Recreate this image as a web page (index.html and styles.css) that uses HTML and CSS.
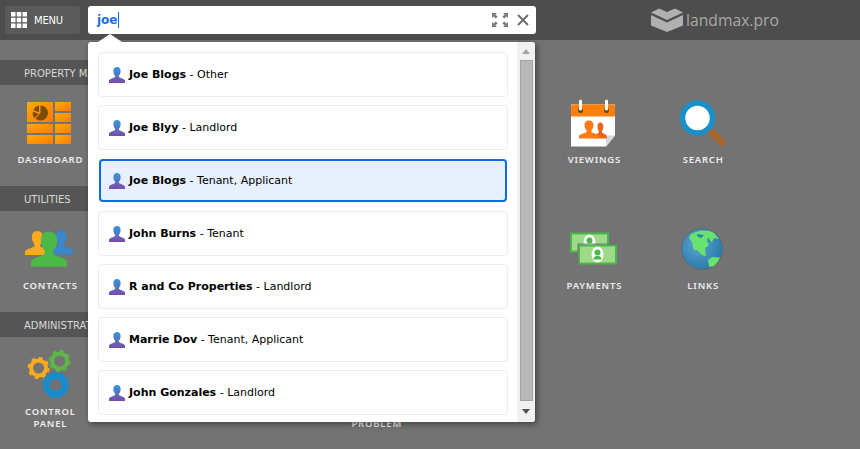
FILE: index.html
```html
<!DOCTYPE html>
<html lang="en">
<head>
<meta charset="utf-8">
<title>landmax.pro</title>
<link rel="stylesheet" href="styles.css">
</head>
<body>
<svg class="defs" width="0" height="0" aria-hidden="true">
  <defs>
    <linearGradient id="pg" x1="0" y1="0" x2="0" y2="1"><stop offset="0" stop-color="#2f9bdc"/><stop offset="1" stop-color="#7d4aa8"/></linearGradient>
    <linearGradient id="og" x1="0" y1="0" x2="1" y2="1"><stop offset="0" stop-color="#ffab0a"/><stop offset="1" stop-color="#ff7a00"/></linearGradient>
    <radialGradient id="gg" cx=".4" cy=".4" r=".7"><stop offset="0" stop-color="#5aa6cf"/><stop offset="1" stop-color="#2474a6"/></radialGradient>
    <path id="bust" d="M8 0C5.400 0 4.400 2 4.400 4.200c0 2 .9 3.600 1.700 4.600v1.300C4.600 11.300 1 11.800 0 13.500V16h16v-2.500c-1-1.700-4.600-2.200-6.100-3.400V8.800c.8-1 1.700-2.600 1.700-4.600C11.600 2 10.600 0 8 0z"/>
    <symbol id="person" viewBox="0 0 16 16"><use href="#bust" fill="url(#pg)"/></symbol>
  </defs>
</svg>

<header class="topbar">
  <button class="menu-btn" type="button">
    <svg class="menu-icon" viewBox="0 0 16 16" width="16" height="16"><g fill="#fff"><rect width="4.500" height="4.500"/><rect x="5.750" width="4.500" height="4.500"/><rect x="11.500" width="4.500" height="4.500"/><rect y="5.750" width="4.500" height="4.500"/><rect x="5.750" y="5.750" width="4.500" height="4.500"/><rect x="11.500" y="5.750" width="4.500" height="4.500"/><rect y="11.500" width="4.500" height="4.500"/><rect x="5.750" y="11.500" width="4.500" height="4.500"/><rect x="11.500" y="11.500" width="4.500" height="4.500"/></g></svg>
    <span>MENU</span>
  </button>

  <div class="search">
    <div class="search-box">
      <span class="query">joe</span>
      <svg class="s-icon expand" viewBox="0 0 16 14" width="16" height="14"><path fill="#7b7b7b" d="M0 0h5L3.400 1.600 5.600 3.800 3.800 5.600 1.600 3.400 0 5zM16 0v5L14.400 3.400 12.200 5.600 10.400 3.800 12.600 1.600 11 0zM0 14V9L1.600 10.600 3.800 8.400 5.600 10.200 3.400 12.400 5 14zM16 14h-5L12.600 12.400 10.400 10.200 12.200 8.400 14.400 10.600 16 9z"/></svg>
      <svg class="s-icon" viewBox="0 0 12 12" width="12" height="12"><path d="M1 1l10 10M11 1L1 11" stroke="#6f6f6f" stroke-width="2" fill="none"/></svg>
    </div>
    <div class="results">
      <ul class="result-list">
        <li class="result"><svg class="person" width="16" height="16"><use href="#person"/></svg><span><b>Joe Blogs</b> - Other</span></li>
        <li class="result"><svg class="person" width="16" height="16"><use href="#person"/></svg><span><b>Joe Blyy</b> - Landlord</span></li>
        <li class="result selected"><svg class="person" width="16" height="16"><use href="#person"/></svg><span><b>Joe Blogs</b> - Tenant, Applicant</span></li>
        <li class="result"><svg class="person" width="16" height="16"><use href="#person"/></svg><span><b>John Burns</b> - Tenant</span></li>
        <li class="result"><svg class="person" width="16" height="16"><use href="#person"/></svg><span><b>R and Co Properties</b> - Landlord</span></li>
        <li class="result"><svg class="person" width="16" height="16"><use href="#person"/></svg><span><b>Marrie Dov</b> - Tenant, Applicant</span></li>
        <li class="result"><svg class="person" width="16" height="16"><use href="#person"/></svg><span><b>John Gonzales</b> - Landlord</span></li>
      </ul>
      <div class="scrollbar">
        <span class="arrow up"></span>
        <span class="thumb"></span>
        <span class="arrow down"></span>
      </div>
    </div>
  </div>

  <div class="logo">
    <svg viewBox="0 0 32 24" width="32" height="24"><g fill="#b0b0b0"><path d="M0 4.500 8 .5 16 4 24 .5 32 4.500 16 12z"/><path d="M0 7 16 14.500 32 7V17.500L16 24 0 17.500z"/></g></svg>
    <span>landmax.pro</span>
  </div>
</header>

<main class="content">
  <section class="group">
    <h2 class="band">PROPERTY MANAGEMENT</h2>
    <div class="tiles">
      <a class="tile">
        <svg class="icon" viewBox="0 0 44 42" width="44" height="42">
          <g fill="url(#og)"><rect width="26" height="20"/><rect x="28" width="16" height="9"/><rect x="28" y="11" width="16" height="9"/><rect y="22" width="26" height="9"/><rect x="28" y="22" width="16" height="9"/><rect y="33" width="26" height="9"/><rect x="28" y="33" width="16" height="9"/></g>
          <path fill="#7a4c05" d="M13.500 3.500a7.500 7.500 0 1 1-5 13.100l5-5.600zM12 3.500v7L6.500 8A7 7 0 0 1 12 3.500zM6 9.500l5.500 2.500-4 4A7 7 0 0 1 6 9.500z"/>
        </svg>
        <span class="label">DASHBOARD</span>
      </a>
      <a class="tile col-6">
        <svg class="icon" viewBox="0 0 44 47" width="44" height="47">
          <path fill="#fff" d="M0 5h44v31l-9 11H0z"/>
          <path fill="#d8d8d8" d="M44 36h-9v11z"/>
          <path fill="#ff7f08" d="M0 7a2 2 0 0 1 2-2h40a2 2 0 0 1 2 2v10H0z"/>
          <circle cx="9.500" cy="11" r="2.500" fill="#5b4a00"/><circle cx="35.500" cy="11" r="2.500" fill="#5b4a00"/>
          <rect x="8" width="3" height="11" rx="1.500" fill="#fff"/><rect x="34" width="3" height="11" rx="1.500" fill="#fff"/>
          <use href="#bust" transform="translate(23 23) scale(.8 1)" fill="#e9631a"/>
          <use href="#bust" transform="translate(8 21) scale(1.250 1.130)" fill="#ff7a14"/>
        </svg>
        <span class="label">VIEWINGS</span>
      </a>
      <a class="tile col-7">
        <svg class="icon" viewBox="0 0 48 46" width="48" height="46">
          <path d="M29.500 29 44.500 42.500" stroke="#a8652e" stroke-width="7" stroke-linecap="round"/>
          <circle cx="19.500" cy="18" r="15" fill="#fff" stroke="#1a90c9" stroke-width="5.500"/>
        </svg>
        <span class="label">SEARCH</span>
      </a>
    </div>
  </section>

  <section class="group">
    <h2 class="band">UTILITIES</h2>
    <div class="tiles">
      <a class="tile">
        <svg class="icon" viewBox="0 0 48 36" width="48" height="36">
          <use href="#bust" transform="translate(0 0) scale(1.550 1.500)" fill="#fdab1c"/>
          <use href="#bust" transform="translate(23.500 -.5) scale(1.550 1.500)" fill="#3b86c8"/>
          <use href="#bust" transform="translate(6 .5) scale(2.250 2.200)" fill="#4bb848"/>
        </svg>
        <span class="label">CONTACTS</span>
      </a>
      <a class="tile col-6">
        <svg class="icon" viewBox="-1 0 48 33" width="48" height="33">
          <rect x="1" y="1" width="37" height="18" fill="#9fd98a" stroke="#4ab848" stroke-width="2"/>
          <ellipse cx="19.500" cy="10" rx="6" ry="8" fill="#fff"/><circle cx="19.500" cy="8" r="3" fill="#4ab848"/>
          <rect x="9" y="13" width="37" height="18" fill="#9fd98a" stroke="#4ab848" stroke-width="2"/>
          <rect x="7.500" y="11.500" width="1" height="21" fill="#737373"/>
          <rect x="7.500" y="11" width="40" height="1" fill="#737373"/>
          <ellipse cx="27.500" cy="22" rx="6" ry="8" fill="#fff"/><circle cx="27.500" cy="20" r="3" fill="#4ab848"/><path d="M23.500 27c0-3 2-3.500 4-3.500s4 .5 4 3.500z" fill="#4ab848"/>
        </svg>
        <span class="label">PAYMENTS</span>
      </a>
      <a class="tile col-7">
        <svg class="icon" viewBox="0 0 42 42" width="42" height="42">
          <circle cx="21" cy="21" r="20.500" fill="url(#gg)" stroke="#5d6a70" stroke-width="1"/>
          <path fill="#69e26f" d="M9 7C15 2 27 1 33 5l5 6-5-1-2 4-3-2-1 6-3 2 1 8-4-1-5-5-3 0-2-8-3-4zM27 32l4-3 8 .5-2 4-4 4.500-4.500 1-1-3z"/>
          <path fill="#2f84b4" d="M16 6l7 1-3 3-3-1zM27 9l2 4-3 2z"/>
        </svg>
        <span class="label">LINKS</span>
      </a>
    </div>
  </section>

  <section class="group">
    <h2 class="band">ADMINISTRATION</h2>
    <div class="tiles">
      <a class="tile">
        <svg class="icon" viewBox="0 0 44 50" width="44" height="50">
          <g fill="none">
            <circle cx="11.600" cy="18" r="7.500" stroke="#fdab1c" stroke-width="4"/><circle cx="11.600" cy="18" r="10" stroke="#fdab1c" stroke-width="2" stroke-dasharray="3.900 3.950"/>
            <circle cx="32.600" cy="11" r="7.500" stroke="#5db646" stroke-width="4"/><circle cx="32.600" cy="11" r="10" stroke="#5db646" stroke-width="2" stroke-dasharray="3.900 3.950"/>
            <circle cx="28.600" cy="35" r="9" stroke="#1a8ccb" stroke-width="6.500"/><circle cx="28.600" cy="35" r="12.500" stroke="#1a8ccb" stroke-width="2" stroke-dasharray="3.900 3.950"/>
          </g>
        </svg>
        <span class="label">CONTROL PANEL</span>
      </a>
      <a class="tile col-4">
        <span class="icon-blank"></span>
        <span class="label">REPORT PROBLEM</span>
      </a>
    </div>
  </section>
</main>
</body>
</html>
```

FILE: styles.css
```css
* { box-sizing: border-box; }
html, body { margin: 0; height: 100%; }
body {
  background: #737373;
  font-family: "DejaVu Sans", sans-serif;
  overflow: hidden;
}
.defs { position: absolute; }

.topbar {
  height: 40px;
  background: #4d4d4d;
  display: flex;
  align-items: center;
  padding: 0 0 0 5px;
}
.menu-btn {
  width: 75px;
  height: 28px;
  border: 0;
  border-radius: 3px;
  background: #5a5a5a;
  color: #fff;
  display: flex;
  align-items: center;
  gap: 7px;
  padding: 0 0 0 6px;
  font: 10px "DejaVu Sans", sans-serif;
  letter-spacing: -.2px;
}
.menu-icon { flex: none; }

.search { position: relative; width: 448px; margin-left: 8px; }
.search-box {
  height: 28px;
  background: #fff;
  border-radius: 3px;
  display: flex;
  align-items: center;
  padding: 0 7px 0 9px;
}
.query {
  font-size: 12px;
  font-weight: 700;
  color: #1a6fe0;
  border-right: 1px solid #1a6fe0;
  margin-right: auto;
  line-height: 16px;
}
.s-icon { flex: none; }
.expand { margin-right: 9px; }

.results {
  position: absolute;
  top: 36px;
  left: 0;
  width: 447px;
  height: 380px;
  background: #fff;
  border-radius: 3px;
  box-shadow: 2px 2px 6px rgba(0,0,0,.45);
  display: flex;
  z-index: 2;
}
.results::before {
  content: "";
  position: absolute;
  left: 10px;
  top: -8px;
  border-left: 12px solid transparent;
  border-right: 12px solid transparent;
  border-bottom: 8px solid #fff;
}
.result-list {
  list-style: none;
  margin: 0;
  padding: 10px 9px 7px 10px;
  width: 429px;
  display: flex;
  flex-direction: column;
  gap: 8px;
}
.result {
  height: 45px;
  flex: none;
  border: 1px solid #ececec;
  border-radius: 4px;
  display: flex;
  align-items: center;
  gap: 4px;
  padding-left: 10px;
  font-size: 11px;
  color: #000;
}
.result b { font-weight: 700; }
.result.selected {
  height: 43px;
  margin: 1px;
  border: 2px solid #0a6ee0;
  background: #e8f0fe;
  padding-left: 8px;
}
.person { flex: none; }

.scrollbar {
  width: 18px;
  background: #f1f1f1;
  display: flex;
  flex-direction: column;
  align-items: center;
  padding-top: 7px;
  border-radius: 0 3px 3px 0;
}
.arrow {
  width: 0;
  height: 0;
  border-left: 4px solid transparent;
  border-right: 4px solid transparent;
  flex: none;
}
.arrow.up { border-bottom: 5px solid #a3a3a3; }
.arrow.down { border-top: 5px solid #505050; margin-top: 8px; }
.thumb {
  width: 13px;
  height: 341px;
  margin-top: 6px;
  background: #b9b9b9;
  border: 1px solid #a3a3a3;
  flex: none;
}

.logo {
  margin-left: 115px;
  display: flex;
  align-items: center;
  gap: 3px;
  color: #a9a9a9;
  font-family: "Open Sans", sans-serif;
  font-size: 15.700px;
}

.content { padding-top: 20px; }
.group { height: 126px; }
.band {
  width: 88px;
  height: 25px;
  margin: 0;
  padding: 1px 0 0 24px;
  background: #555;
  color: #d8d8d8;
  font-size: 10px;
  font-weight: 400;
  line-height: 25px;
  white-space: nowrap;
  overflow: hidden;
}
.tiles {
  display: grid;
  grid-template-columns: repeat(7, 108.800px);
  justify-content: start;
  margin-left: -4px;
}
.col-4 { grid-column: 4; }
.col-6 { grid-column: 6; }
.col-7 { grid-column: 7; }
.tile {
  display: flex;
  flex-direction: column;
  align-items: center;
  height: 101px;
  padding-top: 13px;
}
.icon { height: 50px; flex: none; overflow: visible; margin-left: -2px; }
.icon-blank { height: 50px; flex: none; }
.label {
  width: 84px;
  margin-top: 6px;
  text-align: center;
  color: #eee;
  font-family: "Noto Sans", sans-serif;
  font-size: 9.500px;
  font-weight: 600;
  line-height: 12px;
  letter-spacing: .8px;
}
```
